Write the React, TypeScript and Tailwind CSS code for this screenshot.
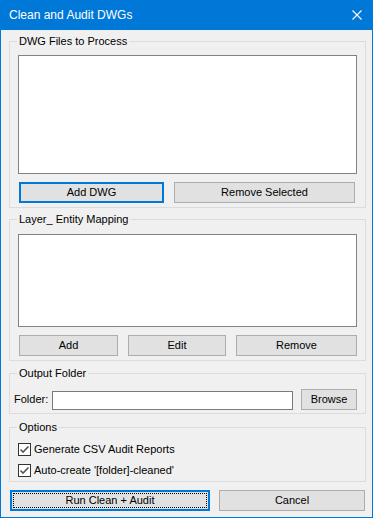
import React from "react";

function Btn({ w, label, focus = false, dotted = false, ml = 0 }: { w: number; label: string; focus?: boolean; dotted?: boolean; ml?: number }) {
  return (
    <div
      className={
        "relative h-[21px] flex items-center justify-center bg-[#e1e1e1] text-[11px] text-black " +
        (focus ? "border-2 border-[#0078d7]" : "border border-[#adadad]")
      }
      style={{ width: w, marginLeft: ml }}
    >
      {dotted && <div className="absolute inset-[1px] border border-dotted border-black" />}
      <span className="leading-[13px]">{label}</span>
    </div>
  );
}

function Group({ label, children, className = "" }: { label: string; children: React.ReactNode; className?: string }) {
  return (
    <div className={"relative border border-[#dcdcdc] ml-[8px] w-[357px] " + className}>
      <div className="absolute -top-[7px] left-[7px] bg-[#f0f0f0] px-[2px] text-[11px] leading-[13px] text-black whitespace-nowrap">
        {label}
      </div>
      {children}
    </div>
  );
}

function Check({ label }: { label: string }) {
  return (
    <div className="h-[21px] flex items-center ml-[8px]">
      <div className="w-[13px] h-[13px] border border-[#333333] bg-white flex items-center justify-center">
        <svg width="11" height="11" viewBox="0 0 11 11">
          <path d="M1.5 5.5 L4 8 L9.5 2.5" fill="none" stroke="#555555" strokeWidth="1.6" />
        </svg>
      </div>
      <span className="ml-[3px] text-[11px] leading-[13px] text-black">{label}</span>
    </div>
  );
}

export default function App() {
  return (
    <div className="w-[373px] h-[518px] bg-[#0078d7] flex flex-col" style={{ fontFamily: '"Liberation Sans", Arial, sans-serif' }}>
      <div className="h-[30px] flex items-center justify-between pl-[9px] pr-[11px] text-white">
        <span className="text-[12px] leading-[16px]">Clean and Audit DWGs</span>
        <svg width="10" height="10" viewBox="0 0 10 10">
          <path d="M0.5 0.5 L9.5 9.5 M9.5 0.5 L0.5 9.5" stroke="white" strokeWidth="1.1" />
        </svg>
      </div>
      <div className="mx-[1px] mb-[1px] flex-1 bg-[#f0f0f0] flex flex-col">
        <Group label="DWG Files to Process" className="mt-[11px] pt-[13px] pb-[4px]">
          <div className="ml-[8px] w-[339px] h-[119px] bg-white border border-[#828282]" />
          <div className="flex mt-[8px]">
            <Btn w={145} label="Add DWG" focus ml={9} />
            <Btn w={181} label="Remove Selected" ml={10} />
          </div>
        </Group>
        <Group label="Layer_ Entity Mapping" className="mt-[11px] pt-[14px] pb-[4px]">
          <div className="ml-[8px] w-[339px] h-[93px] bg-white border border-[#828282]" />
          <div className="flex mt-[8px]">
            <Btn w={99} label="Add" ml={9} />
            <Btn w={98} label="Edit" ml={10} />
            <Btn w={121} label="Remove" ml={10} />
          </div>
        </Group>
        <Group label="Output Folder" className="mt-[12px] pt-[15px] pb-[3px]">
          <div className="flex items-center h-[21px]">
            <span className="ml-[4px] w-[38px] text-[11px] leading-[13px] text-black">Folder:</span>
            <div className="w-[241px] h-[19px] bg-white border border-[#7a7a7a] mt-[2px]" />
            <Btn w={56} label="Browse" ml={8} />
          </div>
        </Group>
        <Group label="Options" className="mt-[13px] pt-[11px] pb-[0px]">
          <Check label="Generate CSV Audit Reports" />
          <Check label="Auto-create '[folder]-cleaned'" />
        </Group>
        <div className="flex mt-[8px]">
          <Btn w={200} label="Run Clean + Audit" focus dotted ml={9} />
          <Btn w={146} label="Cancel" ml={9} />
        </div>
      </div>
    </div>
  );
}
